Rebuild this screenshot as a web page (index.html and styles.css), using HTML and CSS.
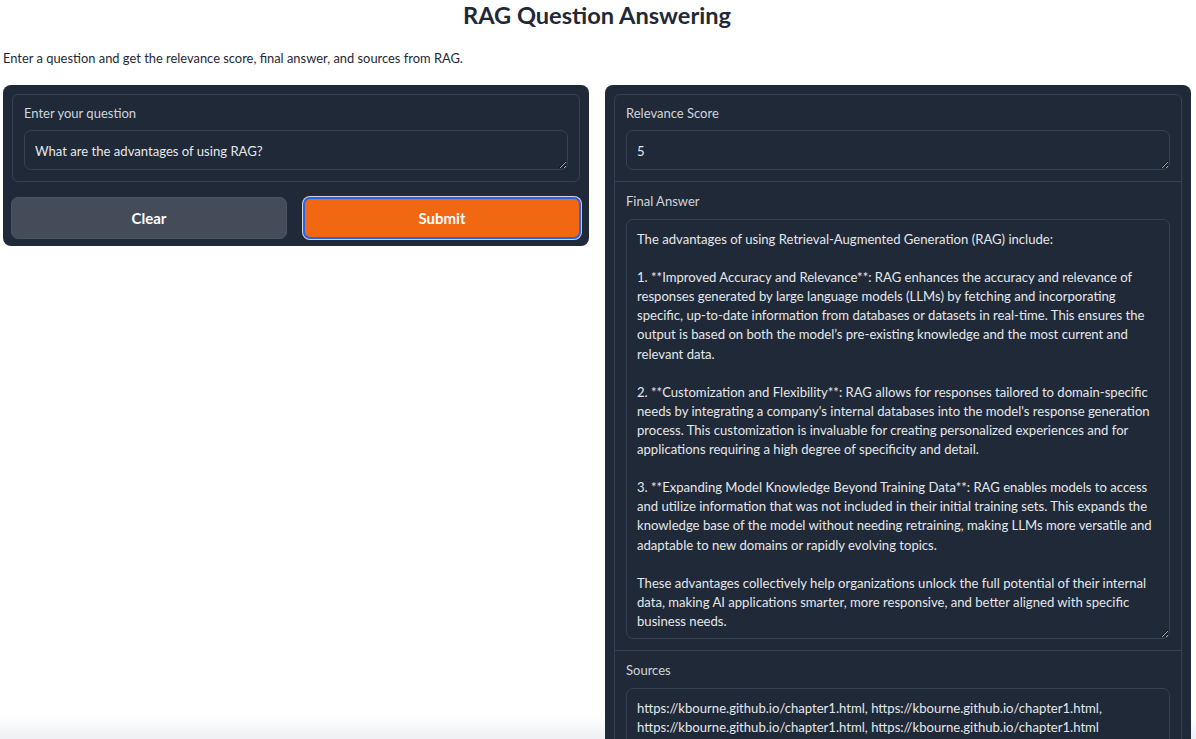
FILE: index.html
```html
<!DOCTYPE html>
<html lang="en">
<head>
<meta charset="utf-8">
<title>RAG Question Answering</title>
<link rel="stylesheet" href="styles.css">
</head>
<body>
<div class="app">
  <h1 class="title">RAG Question Answering</h1>
  <p class="desc">Enter a question and get the relevance score, final answer, and sources from RAG.</p>
  <div class="columns">
    <div class="panel">
      <div class="form">
        <div class="block">
          <label class="label">Enter your question</label>
          <textarea class="field short" wrap="off">What are the advantages of using RAG?</textarea>
        </div>
      </div>
      <div class="buttons">
        <button class="btn btn-secondary">Clear</button>
        <button class="btn btn-primary">Submit</button>
      </div>
    </div>
    <div class="panel">
      <div class="form">
        <div class="block">
          <label class="label">Relevance Score</label>
          <textarea class="field short" wrap="off">5</textarea>
        </div>
        <div class="block">
          <label class="label">Final Answer</label>
          <textarea class="field answer" wrap="off">The advantages of using Retrieval-Augmented Generation (RAG) include:

1. **Improved Accuracy and Relevance**: RAG enhances the accuracy and relevance of
responses generated by large language models (LLMs) by fetching and incorporating
specific, up-to-date information from databases or datasets in real-time. This ensures the
output is based on both the model’s pre-existing knowledge and the most current and
relevant data.

2. **Customization and Flexibility**: RAG allows for responses tailored to domain-specific
needs by integrating a company's internal databases into the model's response generation
process. This customization is invaluable for creating personalized experiences and for
applications requiring a high degree of specificity and detail.

3. **Expanding Model Knowledge Beyond Training Data**: RAG enables models to access
and utilize information that was not included in their initial training sets. This expands the
knowledge base of the model without needing retraining, making LLMs more versatile and
adaptable to new domains or rapidly evolving topics.

These advantages collectively help organizations unlock the full potential of their internal
data, making AI applications smarter, more responsive, and better aligned with specific
business needs.</textarea>
        </div>
        <div class="block">
          <label class="label">Sources</label>
          <textarea class="field sources" wrap="off">https://kbourne.github.io/chapter1.html, https://kbourne.github.io/chapter1.html,
https://kbourne.github.io/chapter1.html, https://kbourne.github.io/chapter1.html</textarea>
        </div>
      </div>
    </div>
  </div>
</div>
</body>
</html>
```

FILE: styles.css
```css
html {
  background: #ffffff;
}
body {
  margin: 0;
  font-family: "Lato", "Liberation Sans", sans-serif;
  color: #1f2937;
  background: linear-gradient(to bottom, rgba(255,255,255,0) 0, rgba(255,255,255,0) 716px, #eef0f3 739px) no-repeat;
  background-size: 100% 739px;
  min-height: 739px;
}
.app {
  padding: 0 5px 0 3px;
}
.title {
  margin: 0;
  font-size: 23.6px;
  line-height: 31px;
  font-weight: 700;
  text-align: center;
  color: #1f2937;
}
.desc {
  margin: 17px 0 0;
  font-size: 12.9px;
  line-height: 20px;
  color: #1f2937;
}
.columns {
  margin-top: 17px;
  display: grid;
  grid-template-columns: 1fr 1fr;
  gap: 16px;
  align-items: start;
}
.panel {
  background: #1f2937;
  border-radius: 8px;
  padding: 9px 8px 7px;
}
.form {
  border: 1px solid #374151;
  border-radius: 6px;
  margin: 0 1px;
}
.block {
  padding: 10px 11px 11px;
  display: flex;
  flex-direction: column;
}
.block + .block {
  border-top: 1px solid #374151;
  padding-top: 11px;
}
.label {
  font-size: 13px;
  line-height: 17px;
  color: #d1d5db;
  margin-bottom: 8px;
}
.block + .block .label {
  margin-bottom: 9px;
}
.field {
  box-sizing: border-box;
  width: 100%;
  background: #1f2937;
  border: 1px solid #374151;
  border-radius: 7px;
  color: #e5e7eb;
  font-family: "Lato", "Liberation Sans", sans-serif;
  font-size: 13.1px;
  line-height: 19.1px;
  padding: 10px 10px;
  overflow: hidden;
  resize: vertical;
  outline: none;
  white-space: pre;
}
.short {
  height: 40px;
  padding-top: 11px;
}
.answer {
  height: 420px;
}
.sources {
  height: 62px;
}
.buttons {
  display: flex;
  gap: 16px;
  margin-top: 15px;
}
.btn {
  flex: 1;
  height: 42px;
  border-radius: 7px;
  font-family: "Lato", "Liberation Sans", sans-serif;
  font-size: 15px;
  font-weight: 700;
  color: #ffffff;
  cursor: pointer;
}
.btn-secondary {
  background: #454c59;
  border: 1px solid #4b5563;
}
.btn-primary {
  background: #f26711;
  border: 2px solid #2563eb;
  box-shadow: 0 0 0 1px #d1d5db;
}
```
